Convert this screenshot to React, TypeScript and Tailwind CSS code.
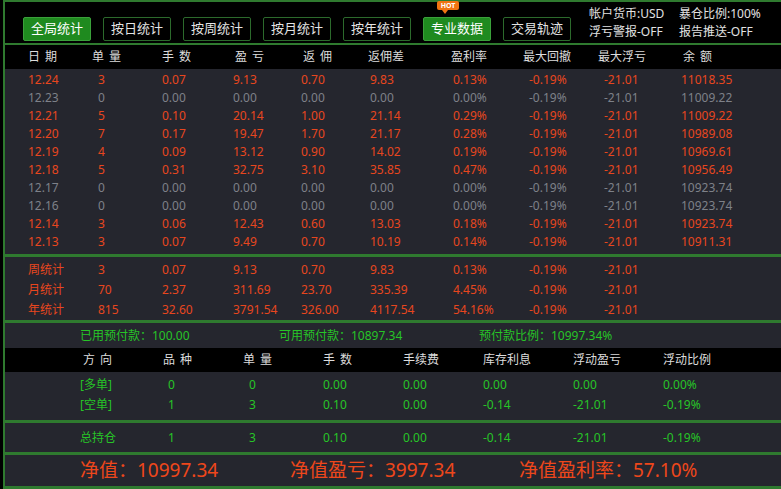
import React from "react";

const RED = "text-[#e8461e]";
const GRAY = "text-[#7e8189]";

const days = [
  { on: true, v: ["12.24", "3", "0.07", "9.13", "0.70", "9.83", "0.13%", "-0.19%", "-21.01", "11018.35"] },
  { on: false, v: ["12.23", "0", "0.00", "0.00", "0.00", "0.00", "0.00%", "-0.19%", "-21.01", "11009.22"] },
  { on: true, v: ["12.21", "5", "0.10", "20.14", "1.00", "21.14", "0.29%", "-0.19%", "-21.01", "11009.22"] },
  { on: true, v: ["12.20", "7", "0.17", "19.47", "1.70", "21.17", "0.28%", "-0.19%", "-21.01", "10989.08"] },
  { on: true, v: ["12.19", "4", "0.09", "13.12", "0.90", "14.02", "0.19%", "-0.19%", "-21.01", "10969.61"] },
  { on: true, v: ["12.18", "5", "0.31", "32.75", "3.10", "35.85", "0.47%", "-0.19%", "-21.01", "10956.49"] },
  { on: false, v: ["12.17", "0", "0.00", "0.00", "0.00", "0.00", "0.00%", "-0.19%", "-21.01", "10923.74"] },
  { on: false, v: ["12.16", "0", "0.00", "0.00", "0.00", "0.00", "0.00%", "-0.19%", "-21.01", "10923.74"] },
  { on: true, v: ["12.14", "3", "0.06", "12.43", "0.60", "13.03", "0.18%", "-0.19%", "-21.01", "10923.74"] },
  { on: true, v: ["12.13", "3", "0.07", "9.49", "0.70", "10.19", "0.14%", "-0.19%", "-21.01", "10911.31"] },
];

const totals = [
  ["周统计", "3", "0.07", "9.13", "0.70", "9.83", "0.13%", "-0.19%", "-21.01"],
  ["月统计", "70", "2.37", "311.69", "23.70", "335.39", "4.45%", "-0.19%", "-21.01"],
  ["年统计", "815", "32.60", "3791.54", "326.00", "4117.54", "54.16%", "-0.19%", "-21.01"],
];

// left edges of the day table columns
const dataCols = ["w-[70px]", "w-[64px]", "w-[71px]", "w-[68px]", "w-[69px]", "w-[83px]", "w-[76px]", "w-[75px]", "w-[77px]", "w-[80px]"];
const headCols = ["w-[64px]", "w-[70px]", "w-[73px]", "w-[68px]", "w-[65px]", "w-[83px]", "w-[72px]", "w-[75px]", "w-[85px]", "w-[60px]"];
const heads = ["日期", "单量", "手数", "盈亏", "返佣", "返佣差", "盈利率", "最大回撤", "最大浮亏", "余额"];

const posCols = ["w-[88px]", "w-[81px]", "w-[74px]", "w-[80px]", "w-[80px]", "w-[90px]", "w-[90px]", "w-[80px]"];
const posHeadCols = ["w-[80px]", "w-[80px]", "w-[80px]", "w-[80px]", "w-[80px]", "w-[90px]", "w-[90px]", "w-[80px]"];
const posHeads = ["方向", "品种", "单量", "手数", "手续费", "库存利息", "浮动盈亏", "浮动比例"];
const positions = [
  ["[多单]", "0", "0", "0.00", "0.00", "0.00", "0.00", "0.00%"],
  ["[空单]", "1", "3", "0.10", "0.00", "-0.14", "-21.01", "-0.19%"],
];

const tabs = ["全局统计", "按日统计", "按周统计", "按月统计", "按年统计", "专业数据", "交易轨迹"];

const Line = () => <div className="h-[3px] shrink-0 bg-[#2f7a2f]" />;

const Tab = ({ label, active, hot }: { label: string; active: boolean; hot?: boolean }) => (
  <div
    className={
      active
        ? "relative w-[68px] h-[24px] rounded-[2px] bg-[#1f8a1f] border border-[#3aa03a] flex items-center justify-center text-white text-[13px]"
        : "relative w-[68px] h-[24px] rounded-[2px] bg-black border border-[#2c6a2c] flex items-center justify-center text-[#e4e4e4] text-[13px]"
    }
  >
    {label}
    {hot && (
      <div className="absolute top-[-17px] left-[13px]">
        <div className="w-[22px] h-[9px] rounded-[2px] bg-[#f07412] flex items-center justify-center text-white text-[7px] font-bold leading-none">
          HOT
        </div>
        <div className="ml-[5px] w-0 h-0 border-l-[3px] border-r-[3px] border-t-[4px] border-l-transparent border-r-transparent border-t-[#f07412]" />
      </div>
    )}
  </div>
);

const Spaced = ({ text }: { text: string }) =>
  text.length === 2 ? <span className="tracking-[5px]">{text}</span> : <span>{text}</span>;

export default function App() {
  return (
    <div className="w-[781px] h-[489px] bg-black pl-[3px] overflow-hidden font-['Noto_Sans','Noto_Sans_CJK_SC',sans-serif] text-[12px]">
      <div className="h-full flex flex-col border-l-2 border-t-2 border-[#2f7a2f]">
        {/* top bar */}
        <div className="h-[41px] shrink-0 flex items-start pl-[18px]">
          <div className="mt-[15px] flex gap-[12px]">
            {tabs.map((t, i) => (
              <Tab key={t} label={t} active={i === 0 || i === 5} hot={i === 5} />
            ))}
          </div>
          <div className="ml-[18px] mt-[3px] grid grid-cols-[90px_100px] leading-[18px] text-[#e2e2e2]">
            <span>帐户货币:USD</span>
            <span>暴仓比例:100%</span>
            <span>浮亏警报-OFF</span>
            <span>报告推送-OFF</span>
          </div>
        </div>
        <div className="h-[2px] shrink-0 bg-[#2f7a2f]" />
        {/* column header */}
        <div className="h-[24px] shrink-0 flex items-center pl-[23px] text-[#dcdcdc]">
          {heads.map((h, i) => (
            <div key={h} className={headCols[i]}>
              <Spaced text={h} />
            </div>
          ))}
        </div>
        {/* day rows */}
        <div className="h-[185px] shrink-0 bg-[#25262e] pt-[2px] pl-[23px]">
          {days.map((d) => (
            <div key={d.v[0]} className={"h-[18px] flex items-center " + (d.on ? RED : GRAY)}>
              {d.v.map((c, i) => (
                <div key={i} className={dataCols[i]}>
                  {c}
                </div>
              ))}
            </div>
          ))}
        </div>
        <Line />
        {/* totals */}
        <div className="h-[63px] shrink-0 bg-[#25262e] pt-[3px] pl-[23px]">
          {totals.map((r) => (
            <div key={r[0]} className={"h-[20px] flex items-center " + RED}>
              {r.map((c, i) => (
                <div key={i} className={dataCols[i]}>
                  {c}
                </div>
              ))}
            </div>
          ))}
        </div>
        <Line />
        {/* prepay */}
        <div className="h-[25px] shrink-0 bg-[#25262e] flex items-center pl-[75px] text-[#27c427]">
          <div className="w-[199px]">已用预付款：100.00</div>
          <div className="w-[200px]">可用预付款：10897.34</div>
          <div>预付款比例：10997.34%</div>
        </div>
        {/* positions header */}
        <div className="h-[24px] shrink-0 flex items-center pl-[78px] text-[#dcdcdc]">
          {posHeads.map((h, i) => (
            <div key={h} className={posHeadCols[i]}>
              <Spaced text={h} />
            </div>
          ))}
        </div>
        <div className="h-[48px] shrink-0 bg-[#25262e] pt-[3px] pl-[75px] text-[#27c427]">
          {positions.map((r) => (
            <div key={r[0]} className="h-[20px] flex items-center">
              {r.map((c, i) => (
                <div key={i} className={posCols[i]}>
                  {c}
                </div>
              ))}
            </div>
          ))}
        </div>
        <Line />
        <div className="h-[29px] shrink-0 bg-[#25262e] flex items-center pl-[75px] text-[#27c427]">
          {["总持仓", "1", "3", "0.10", "0.00", "-0.14", "-21.01", "-0.19%"].map((c, i) => (
            <div key={i} className={posCols[i]}>
              {c}
            </div>
          ))}
        </div>
        <Line />
        {/* net value */}
        <div className="h-[31px] shrink-0 bg-[#25262e] flex items-center pl-[75px] text-[19px] text-[#ee471b]">
          <div className="w-[210px]">净值：10997.34</div>
          <div className="w-[229px]">净值盈亏：3997.34</div>
          <div>净值盈利率：57.10%</div>
        </div>
        <Line />
      </div>
    </div>
  );
}
